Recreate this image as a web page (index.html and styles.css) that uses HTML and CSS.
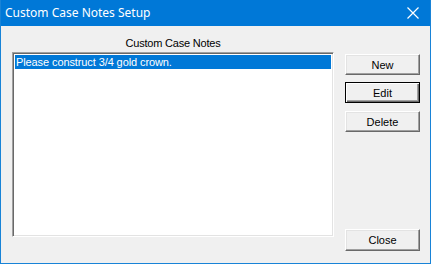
FILE: index.html
```html
<!DOCTYPE html>
<html>
<head>
  <title>Custom Case Notes Setup</title>
  <link rel="stylesheet" href="styles.css">
</head>
<body>
  <div class="window">
    <div class="titlebar">
      <span class="title">Custom Case Notes Setup</span>
      <svg class="close-x" width="12" height="12" viewBox="0 0 12 12">
        <path d="M0.5 0.5 L11.5 11.5 M11.5 0.5 L0.5 11.5" stroke="#fff" stroke-width="1.2" fill="none"/>
      </svg>
    </div>

    <div class="content">
      <!-- list of notes -->
      <div class="list-col">
        <div class="list-label">Custom Case Notes</div>
        <div class="listbox">
          <div class="list-item selected">Please construct 3/4 gold crown.</div>
        </div>
      </div>

      <!-- buttons -->
      <div class="button-col">
        <button class="btn">New</button>
        <button class="btn default">Edit</button>
        <button class="btn">Delete</button>
        <button class="btn bottom">Close</button>
      </div>
    </div>
  </div>
</body>
</html>
```

FILE: styles.css
```css
body {
  margin: 0;
  background-color: #f0f0f0;
  font-family: 'Liberation Sans', Arial, sans-serif;
  font-size: 11px;
  color: #000;
}

.window {
  width: 431px;
  height: 264px;
  box-sizing: border-box;
  border: 1px solid #1883d7;
  border-top: none;
  display: flex;
  flex-direction: column;
}

/* Title bar */
.titlebar {
  height: 26px;
  background-color: #0078d7;
  color: #fff;
  display: flex;
  align-items: center;
  padding: 0 11px 0 4px;
  flex-shrink: 0;
}

.title {
  font-family: 'Noto Sans', 'Liberation Sans', sans-serif;
  font-size: 12px;
  flex: 1;
  padding-bottom: 1px;
}

.close-x {
  display: block;
}

/* Main area */
.content {
  flex: 1;
  display: flex;
  padding: 11px 10px 12px 11px;
  gap: 11px;
}

.list-col {
  width: 322px;
  display: flex;
  flex-direction: column;
}

.list-label {
  text-align: center;
  line-height: 13px;
  height: 15px;
  letter-spacing: -0.2px;
}

.listbox {
  height: 185px;
  box-sizing: border-box;
  background: #fff;
  border-top: 1px solid #a0a0a0;
  border-left: 1px solid #a0a0a0;
  border-right: 1px solid #fff;
  border-bottom: 1px solid #fff;
  box-shadow: inset 1px 1px 0 #696969, inset -1px -1px 0 #e3e3e3;
  padding: 2px;
}

.list-item {
  height: 14px;
  line-height: 14px;
  padding-left: 1px;
  letter-spacing: -0.1px;
}

.selected {
  background-color: #0078d7;
  color: #fff;
}

/* Buttons */
.button-col {
  width: 75px;
  display: flex;
  flex-direction: column;
  padding-top: 17px;
}

.btn {
  height: 21px;
  margin-bottom: 7px;
  padding: 0;
  font-family: 'Liberation Sans', Arial, sans-serif;
  font-size: 11px;
  color: #000;
  background: #f0f0f0;
  border-top: 1px solid #fff;
  border-left: 1px solid #fff;
  border-right: 1px solid #696969;
  border-bottom: 1px solid #696969;
  box-shadow: inset -1px -1px 0 #a0a0a0, inset 1px 1px 0 #e3e3e3;
}

.btn.default {
  border: 1px solid #000;
  box-shadow: inset 1px 1px 0 #fff, inset -1px -1px 0 #696969, inset -2px -2px 0 #a0a0a0;
  margin-bottom: 8px;
}

.btn.bottom {
  margin-top: auto;
  margin-bottom: 0;
  height: 22px;
}
```
